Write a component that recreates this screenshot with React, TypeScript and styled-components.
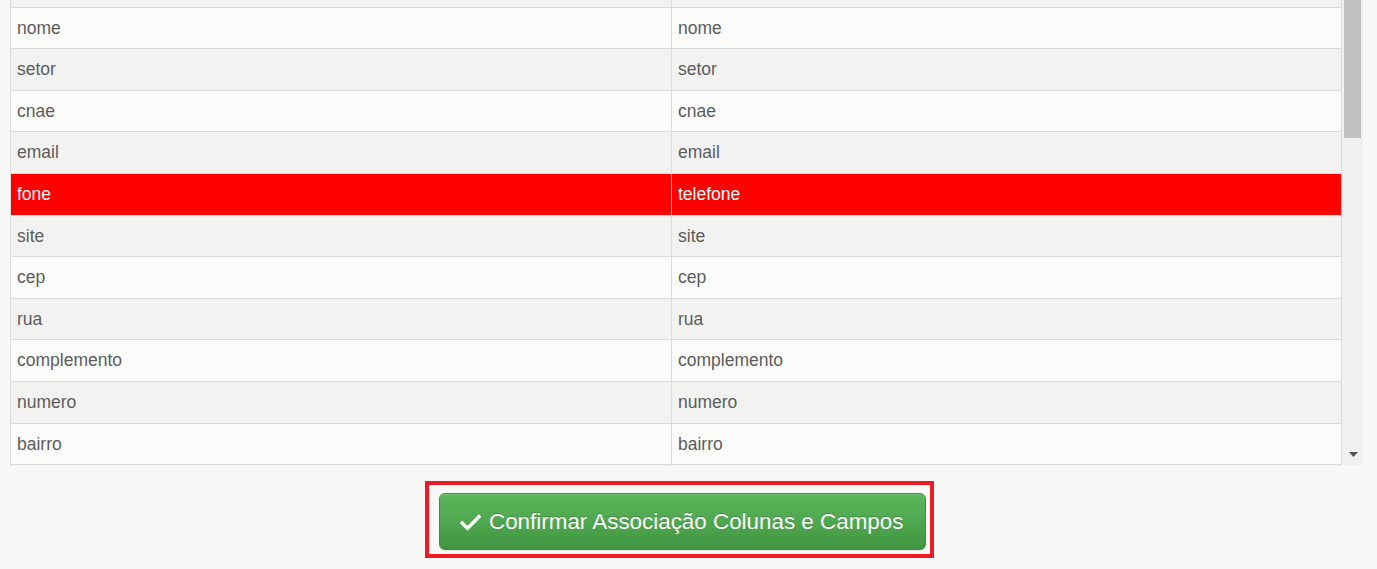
import React, { useLayoutEffect, useRef } from 'react';
import styled, { createGlobalStyle, css } from 'styled-components';

type Mapping = {
  coluna: string;
  campo: string;
  erro?: boolean;
};

const mappings: Mapping[] = [
  { coluna: 'empresa', campo: 'empresa' },
  { coluna: 'nome', campo: 'nome' },
  { coluna: 'setor', campo: 'setor' },
  { coluna: 'cnae', campo: 'cnae' },
  { coluna: 'email', campo: 'email' },
  { coluna: 'fone', campo: 'telefone', erro: true },
  { coluna: 'site', campo: 'site' },
  { coluna: 'cep', campo: 'cep' },
  { coluna: 'rua', campo: 'rua' },
  { coluna: 'complemento', campo: 'complemento' },
  { coluna: 'numero', campo: 'numero' },
  { coluna: 'bairro', campo: 'bairro' },
  { coluna: 'cidade', campo: 'cidade' },
];

const GlobalStyle = createGlobalStyle`
  html, body {
    margin: 0;
    padding: 0;
    background: #f8f9f7;
  }
  body {
    font-family: "Liberation Sans", Arial, sans-serif;
    color: #5c5c5c;
  }
`;

export default function App() {
  const scrollRef = useRef<HTMLDivElement>(null);

  useLayoutEffect(() => {
    if (scrollRef.current) {
      scrollRef.current.scrollTop = 35;
    }
  }, []);

  return (
    <>
      <GlobalStyle />
      <Page>
        <ScrollFrame>
          <ScrollArea ref={scrollRef}>
            <Table>
              <tbody>
                {mappings.map((m) => (
                  <Row key={m.coluna} $erro={m.erro}>
                    <Cell>{m.coluna}</Cell>
                    <Cell>{m.campo}</Cell>
                  </Row>
                ))}
              </tbody>
            </Table>
          </ScrollArea>
          <ScrollTrack>
            <ScrollThumb />
            <ScrollArrow>
              <svg width="9" height="5" viewBox="0 0 9 5">
                <path d="M0 0 H9 L4.5 5 Z" fill="#505050" />
              </svg>
            </ScrollArrow>
          </ScrollTrack>
        </ScrollFrame>
        <Footer>
          <Highlight>
            <ConfirmButton type="button">
              <CheckIcon viewBox="0 0 20 16">
                <path d="M2 8.5 L7.2 13.5 L18 2.5" />
              </CheckIcon>
              Confirmar Associação Colunas e Campos
            </ConfirmButton>
          </Highlight>
        </Footer>
      </Page>
    </>
  );
}

const Page = styled.div`
  padding: 0 14px 0 10px;
  display: flex;
  flex-direction: column;
`;

const ScrollFrame = styled.div`
  display: flex;
  height: 466px;
`;

const ScrollArea = styled.div`
  flex: 1;
  overflow: hidden;
`;

const ScrollTrack = styled.div`
  width: 21px;
  height: 465px;
  display: flex;
  flex-direction: column;
  justify-content: space-between;
  background: #f0f0ef;
`;

const ScrollThumb = styled.div`
  height: 138px;
  margin: 0 2px;
  background: #c1c1c0;
`;

const ScrollArrow = styled.div`
  height: 21px;
  display: flex;
  align-items: center;
  justify-content: center;
  padding-left: 1px;
  padding-top: 2px;
`;

const Table = styled.table`
  width: 100%;
  table-layout: fixed;
  border-collapse: collapse;
  border: 1px solid #dcdcdc;
  font-size: 17.5px;
  line-height: 24.6px;
`;

const Row = styled.tr<{ $erro?: boolean }>`
  background: #fbfcfa;

  &:nth-child(odd) {
    background: #f2f3f1;
  }

  ${({ $erro }) =>
    $erro &&
    css`
      &&,
      &&:nth-child(odd) {
        background: #ff0000;
        color: #fff;
      }
    `}
`;

const Cell = styled.td`
  padding: 8px 6px;
  border-top: 1px solid #dcdcdc;
  border-left: 1px solid #dcdcdc;
  white-space: nowrap;

  &:first-child {
    width: 648px;
  }
`;

const Footer = styled.div`
  display: flex;
  padding: 15px 0 0 415px;
`;

const Highlight = styled.div`
  display: flex;
  border: 4px solid #ed1c24;
  padding: 8px 4px 4px 10px;
`;

const ConfirmButton = styled.button`
  display: flex;
  align-items: center;
  gap: 8px;
  width: 487px;
  height: 57px;
  padding: 0 0 0 20px;
  border: 1px solid #3e8f3e;
  border-radius: 6px;
  background-image: linear-gradient(to bottom, #5cb85c 0%, #419641 100%);
  box-shadow: inset 0 1px 0 rgba(255, 255, 255, 0.15), 0 1px 1px rgba(0, 0, 0, 0.08);
  color: #fff;
  font-family: "Liberation Sans", Arial, sans-serif;
  font-size: 22.4px;
  text-shadow: 0 -1px 0 rgba(0, 0, 0, 0.2);
  cursor: pointer;
`;

const CheckIcon = styled.svg`
  width: 21px;
  height: 17px;
  fill: none;
  stroke: #fff;
  stroke-width: 3.4;
  stroke-linecap: square;
  margin-top: 1px;
`;
